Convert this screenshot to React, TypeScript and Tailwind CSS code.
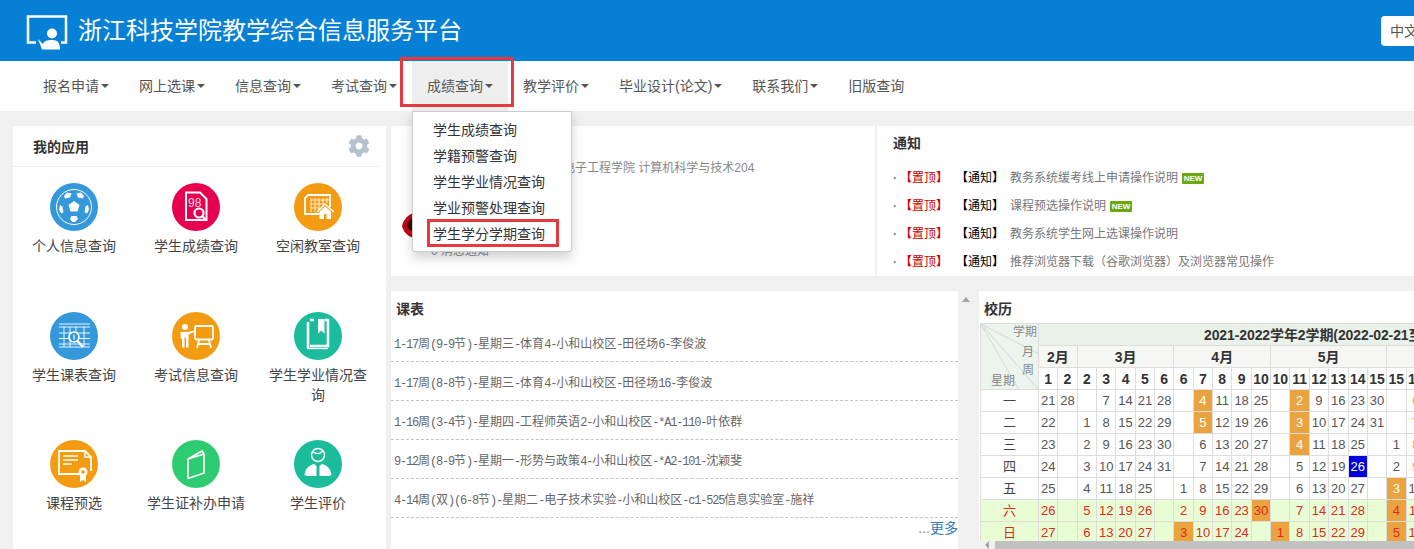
import React from "react";
import { FaCog } from "react-icons/fa";

const navItems = ["报名申请", "网上选课", "信息查询", "考试查询", "成绩查询", "教学评价", "毕业设计(论文)", "联系我们", "旧版查询"];
const menuItems = ["学生成绩查询", "学籍预警查询", "学生学业情况查询", "学业预警处理查询", "学生学分学期查询"];
const notices = [
  { text: "教务系统缓考线上申请操作说明", isNew: true },
  { text: "课程预选操作说明", isNew: true },
  { text: "教务系统学生网上选课操作说明", isNew: false },
  { text: "推荐浏览器下载（谷歌浏览器）及浏览器常见操作", isNew: false },
];
const courses = [
  "1-17周(9-9节)-星期三-体育4-小和山校区-田径场6-李俊波",
  "1-17周(8-8节)-星期三-体育4-小和山校区-田径场16-李俊波",
  "1-16周(3-4节)-星期四-工程师英语2-小和山校区-*A1-110-叶依群",
  "9-12周(8-9节)-星期一-形势与政策4-小和山校区-*A2-101-沈颖斐",
  "4-14周(双)(6-8节)-星期二-电子技术实验-小和山校区-c1-525信息实验室-施祥",
];
const weeks = [1, 2, 2, 3, 4, 5, 6, 6, 7, 8, 9, 10, 10, 11, 12, 13, 14, 15, 15, 16];
const months = [
  { label: "2月", span: 2 },
  { label: "3月", span: 5 },
  { label: "4月", span: 5 },
  { label: "5月", span: 6 },
  { label: "", span: 2 },
];
// * = 放假(橙底), ! = 当天(蓝底), ~ = 橙字
const calendar = [
  { day: "一", cells: "21,28,,7,14,21,28,,4*,11,18,25,,2*,9,16,23,30,,6~" },
  { day: "二", cells: "22,,1,8,15,22,29,,5*,12,19,26,,3*,10,17,24,31,,7~" },
  { day: "三", cells: "23,,2,9,16,23,30,,6,13,20,27,,4*,11,18,25,,1,8~" },
  { day: "四", cells: "24,,3,10,17,24,31,,7,14,21,28,,5,12,19,26!,,2,9~" },
  { day: "五", cells: "25,,4,11,18,25,,1,8,15,22,29,,6,13,20,27,,3*,10" },
  { day: "六", cells: "26,,5,12,19,26,,2,9,16,23,30*,,7,14,21,28,,4*,11", weekend: true },
  { day: "日", cells: "27,,6,13,20,27,,3*,10,17,24,,1*,8,15,22,29,,5*,12", weekend: true },
];

const Disc = ({ color, children }: { color: string; children: React.ReactNode }) => (
  <svg width="48" height="48" viewBox="0 0 48 48" fill="none">
    <circle cx="24" cy="24" r="24" fill={color} />
    {children}
  </svg>
);

const icons: Record<string, React.ReactNode> = {
  ball: (
    <Disc color="#3498db">
      <circle cx="24" cy="24" r="17.5" stroke="#fff" strokeWidth="1" />
      <path d="M24 18l5.5 4-2 6.5h-7l-2-6.5zM17 9.5l4.5 1-1.5 4-5 1-1-2.5zM31 9.5l-4.5 1 1.5 4 5 1 1-2.5zM10 22l2.5 1.5 1 6-2.5 1-2-4zM38 22l-2.500 1.500-1 6 2.500 1 2-4zM20 36l1.500-3h5l1.500 3-3 3h-3z" fill="#fff" />
    </Disc>
  ),
  score: (
    <Disc color="#e6004f">
      <path d="M14 9.500h14l6.500 6.500v21H14z" stroke="#fff" strokeWidth="2" />
      <text x="16" y="23.500" fill="#ffd5e3" fontSize="12" fontFamily="Liberation Sans">98</text>
      <circle cx="27" cy="30" r="4.500" fill="#e6004f" stroke="#fff" strokeWidth="2.200" />
      <path d="M30 33l3.500 3.500" stroke="#fff" strokeWidth="2" />
    </Disc>
  ),
  room: (
    <Disc color="#f39c12">
      <path d="M14 12h22v12M14 12l-3 3v16h15" stroke="#fff" strokeWidth="1.800" />
      <path d="M17 15v14M21 15v14M25 15v11M29 15v6M33 15v5M17 17h18M17 21h13M17 25h8" stroke="#fff" strokeWidth="0.800" />
      <path d="M23 29l8-8 9 8" stroke="#fff" strokeWidth="1.500" />
      <path d="M25.500 28.500l5.500-5 6 5V36H25.500z" fill="#fff" />
      <rect x="30" y="31" width="2.500" height="5" fill="#f39c12" />
    </Disc>
  ),
  table: (
    <Disc color="#3498db">
      <path d="M9 12h31M9 15h31M9 21h31M9 26.500h31M9 32h31M9 35h31M14 15v20M20 15v20M26 15v8M34 15v20" stroke="#fff" strokeWidth="0.900" />
      <circle cx="24" cy="25" r="5" fill="#3498db" stroke="#fff" strokeWidth="1.600" />
      <path d="M27.500 29l5.500 6" stroke="#fff" strokeWidth="2.400" />
      <path d="M24 22.500v5" stroke="#fff" strokeWidth="1.200" />
    </Disc>
  ),
  exam: (
    <Disc color="#f39c12">
      <circle cx="13" cy="15" r="3" fill="#fff" />
      <path d="M8.500 20h7l7-1.500v1.500l-6 2.500v13h-2.500v-10h-1.500v10H10V27l-1.500-1z" fill="#fff" />
      <rect x="23" y="14" width="18" height="13.500" rx="1.500" stroke="#fff" strokeWidth="1.800" />
      <path d="M27 28l-2 8M37 28l2 8M26 32h12" stroke="#fff" strokeWidth="1.800" />
    </Disc>
  ),
  book: (
    <Disc color="#1abc9c">
      <path d="M14 10v26M16 8h4M31 8h3v26H16" stroke="#fff" strokeWidth="2.600" />
      <path d="M13 36.500h21" stroke="#fff" strokeWidth="1.400" />
      <path d="M24 7h6.500v14.500l-3.200-3-3.300 3z" fill="#fff" />
    </Disc>
  ),
  cert: (
    <Disc color="#f39c12">
      <path d="M30 34H9V11h26l6 6v14" stroke="#fff" strokeWidth="1.800" />
      <path d="M35 11v6h6" stroke="#fff" strokeWidth="1.500" />
      <path d="M13 16h15M13 20h15M13 24h9" stroke="#fff" strokeWidth="1.300" />
      <circle cx="33" cy="32" r="4.500" fill="#fff" />
      <circle cx="33" cy="32" r="1.800" fill="#f39c12" />
      <path d="M30 36v6l3-2 3 2v-6z" fill="#fff" />
    </Disc>
  ),
  notebook: (
    <Disc color="#2ecc71">
      <path d="M16 19l16-5v19l-16 5.500z" stroke="#fff" strokeWidth="1.700" strokeLinejoin="round" />
      <path d="M16 19l14-8 2 3" stroke="#fff" strokeWidth="1.700" strokeLinejoin="round" />
    </Disc>
  ),
  person: (
    <Disc color="#1abc9c">
      <circle cx="24" cy="15" r="6.500" stroke="#fff" strokeWidth="1.500" />
      <path d="M19 12c3 2 7 2 10-1" stroke="#fff" strokeWidth="1.300" />
      <path d="M20 24l2.500 2V36H13c-.8-.6-1.300-.8-2.500-.8 .5-5 3-9.700 9.500-11.200zM28 24l-2.500 2V36H35c.8-.6 1.300-.8 2.500-.8-.5-5-3-9.700-9.500-11.200z" fill="#fff" />
    </Disc>
  ),
};

const apps = [
  { label: "个人信息查询", icon: "ball" },
  { label: "学生成绩查询", icon: "score" },
  { label: "空闲教室查询", icon: "room" },
  { label: "学生课表查询", icon: "table" },
  { label: "考试信息查询", icon: "exam" },
  { label: "学生学业情况查询", icon: "book" },
  { label: "课程预选", icon: "cert" },
  { label: "学生证补办申请", icon: "notebook" },
  { label: "学生评价", icon: "person" },
];

const Course = ({ text }: { text: string }) => (
  <div className="h-[39px] pl-[3px] pt-[5px] flex items-center border-b border-dashed border-[#c4c4c4] text-xs text-[#666] whitespace-nowrap">
    <span>
      {text.split(/([\x00-\x7f]+)/).map((part, i) =>
        /^[\x00-\x7f]+$/.test(part) ? (
          <span key={i} className="font-['Liberation_Mono',monospace] text-xs tracking-[-1.2px]">
            {part}
          </span>
        ) : (
          <span key={i}>{part}</span>
        )
      )}
    </span>
  </div>
);

const DayCell = ({ value, weekend }: { value: string; weekend?: boolean }) => {
  const num = value.replace(/[*!~]/, "");
  let cls = weekend ? "text-[#dd2a1c]" : "text-[#555]";
  if (value.endsWith("*")) cls = weekend ? "bg-[#eba33f] text-[#dd2a1c]" : "bg-[#eba33f] text-white";
  if (value.endsWith("!")) cls = "bg-[#0000dd] text-white";
  if (value.endsWith("~")) cls = "text-[#eba33f]";
  return <td className={`border border-[#ddd] text-center text-[13px] p-0 ${cls}`}>{num}</td>;
};

const App = () => {
  return (
    <div className="w-[1414px] h-[549px] overflow-hidden bg-[#f0f0f0] font-['Liberation_Sans','Noto_Sans_CJK_SC',sans-serif] text-[#333]">
      <header className="h-[61px] bg-[#0680d5] flex items-center pl-[25px]">
        <svg width="44" height="40" viewBox="0 0 44 40" fill="none">
          <path d="M11 31.500H3V5.500h38v26h-5" stroke="#fff" strokeWidth="2.500" />
          <circle cx="27" cy="22.500" r="5" fill="#fff" />
          <path d="M13 28l5 5c1-3 4-4 9-4 6 0 8 3 8 9.500H17z" fill="#fff" />
        </svg>
        <h1 className="ml-[9px] text-2xl font-normal text-white whitespace-nowrap">浙江科技学院教学综合信息服务平台</h1>
        <div className="ml-auto w-[33px] h-[30px] bg-white rounded-l-[4px] overflow-hidden whitespace-nowrap pl-[9px] text-sm leading-[30px] text-[#555]">
          中文
        </div>
      </header>

      <nav className="h-[50px] bg-white flex pl-[28px] text-sm text-[#555]">
        {navItems.map((item, i) => (
          <div key={item} className={`relative flex items-center px-[15px] whitespace-nowrap ${i === 4 ? "bg-[#eee]" : ""}`}>
            {item}
            {i < 8 && <span className="ml-[2px] border-t-[4px] border-x-[4px] border-x-transparent border-t-[#555]" />}
            {i === 4 && (
              <>
                <div className="absolute left-[-12px] top-[-4px] w-[114px] h-[50px] border-[3px] border-[#e8393f]" />
                <ul className="absolute z-10 left-0 top-full w-[160px] h-[141px] py-[5px] bg-white border border-[#ccc] rounded-b-[3px] shadow-[0_6px_12px_rgba(0,0,0,0.18)]">
                  {menuItems.map((m, j) => (
                    <li key={m} className="relative h-[26px] pl-[20px] leading-[26px] text-[#333]">
                      {m}
                      {j === 4 && <div className="absolute left-[14px] top-[-2px] w-[132px] h-[28px] border-[3px] border-[#e8393f]" />}
                    </li>
                  ))}
                </ul>
              </>
            )}
          </div>
        ))}
      </nav>

      <main className="flex pt-[15px] pl-[13px]">
        <aside className="w-[373px] h-[423px] bg-white shrink-0">
          <div className="h-[41px] mr-[6px] pl-[20px] pr-[10px] flex items-center justify-between border-b border-[#eee]">
            <h2 className="pt-[2px] text-sm font-bold">我的应用</h2>
            <FaCog className="text-[22px] text-[#b4c2cf]" />
          </div>
          <div className="grid grid-cols-[122px_122px_122px] auto-rows-[128.5px] pt-[16px]">
            {apps.map((app) => (
              <div key={app.label} className="flex flex-col items-center px-[6px]">
                {icons[app.icon]}
                <span className="mt-[5px] text-sm leading-[20px] text-center text-[#444]">{app.label}</span>
              </div>
            ))}
          </div>
        </aside>

        <div className="ml-[5px] flex-1 min-w-0 flex flex-col gap-[15px]">
          <section className="flex h-[150px] gap-[2px]">
            <div className="w-[484px] bg-white flex pl-[11px]">
              <svg className="self-end mb-[37px] shrink-0" width="29" height="26" viewBox="0 0 29 26">
                <path d="M0 13C1 8 5 3 9 1 14-1 24 0 29 4V24C22 27 14 26 9 24 5 22 1 18 0 13z" fill="#c6020f" />
                <circle cx="11" cy="12" r="6" fill="#33090c" />
              </svg>
              <div className="flex flex-col justify-between pt-[34px] pb-[17px] text-xs text-[#888] whitespace-nowrap">
                <p className="pl-[96px]">信息与电子工程学院 计算机科学与技术204</p>
                <p>0 消息通知</p>
              </div>
            </div>
            <div className="flex-1 bg-white pl-[16px]">
              <h2 className="h-[34px] leading-[34px] text-sm font-bold">通知</h2>
              <ul className="pt-[4px]">
                {notices.map((n) => (
                  <li key={n.text} className="h-[28px] flex items-center text-xs whitespace-nowrap">
                    <span className="w-[7px] font-bold text-[#777]">·</span>
                    <span className="w-[48px] text-[#d00000]"><b>【</b>置顶<b>】</b></span>
                    <span className="ml-[8px] w-[48px] text-black"><b>【</b>通知<b>】</b></span>
                    <span className="ml-[6px] text-[#777]">{n.text}</span>
                    {n.isNew && (
                      <span className="ml-[4px] w-[22px] h-[11px] rounded-[1px] bg-[#6aa912] text-white text-[8px] font-bold leading-[11px] text-center">
                        NEW
                      </span>
                    )}
                  </li>
                ))}
              </ul>
            </div>
          </section>

          <section className="flex h-[258px]">
            <div className="w-[567px] bg-white shrink-0">
              <h2 className="h-[32px] pl-[5px] leading-[36px] text-sm font-bold">课表</h2>
              {courses.map((c) => (
                <Course key={c} text={c} />
              ))}
              <div className="text-right text-sm leading-[20px] text-[#888]">
                ...<span className="text-[#337ab7]">更多</span>
              </div>
            </div>
            <div className="w-[16px] shrink-0 flex justify-center pt-[6px]">
              <span className="h-0 border-b-[5px] border-x-[4px] border-x-transparent border-b-[#a3a3a3]" />
            </div>
            <div className="ml-[5px] flex-1 min-w-0 bg-white flex flex-col">
              <h2 className="h-[32px] pl-[5px] leading-[36px] text-sm font-bold shrink-0">校历</h2>
              <div className="h-[218px] overflow-hidden pl-[1px] shrink-0">
                <table className="table-fixed border-collapse w-[445px]">
                  <colgroup>
                    <col className="w-[58px]" />
                    {weeks.map((_, i) => (
                      <col key={i} className="w-[19.350px]" />
                    ))}
                  </colgroup>
                  <thead>
                    <tr className="h-[22px]">
                      <th rowSpan={3} className="relative border border-[#ddd] bg-[#edf4ed] p-0 font-normal text-xs text-[#888]">
                        <svg className="absolute inset-0" width="58" height="66" viewBox="0 0 58 66" fill="none">
                          <path d="M0 0L58 66M0 0L38 66M0 0L58 30" stroke="#d4d8d4" />
                        </svg>
                        <span className="absolute right-[1px] top-0">学期</span>
                        <span className="absolute right-[4px] top-[20px]">月</span>
                        <span className="absolute right-[4px] top-[38px]">周</span>
                        <span className="absolute left-[10px] top-[49px]">星期</span>
                      </th>
                      <th colSpan={20} className="border border-[#ddd] bg-[#e9f2e9] pl-[165px] text-left text-sm font-bold tracking-[-0.1px] whitespace-nowrap">
                        2021-2022学年2学期(2022-02-21至2022-07-10)
                      </th>
                    </tr>
                    <tr className="h-[22px]">
                      {months.map((m, i) => (
                        <th key={i} colSpan={m.span} className="border border-[#ddd] bg-[#f6f7f2] p-0 text-sm font-bold">
                          {m.label}
                        </th>
                      ))}
                    </tr>
                    <tr className="h-[22px]">
                      {weeks.map((w, i) => (
                        <th key={i} className="border border-[#ddd] bg-white p-0 text-sm font-bold">
                          {w}
                        </th>
                      ))}
                    </tr>
                  </thead>
                  <tbody>
                    {calendar.map((row) => (
                      <tr key={row.day} className={`h-[22px] ${row.weekend ? "bg-[#e9fdd5]" : "bg-white"}`}>
                        <td className={`border border-[#ddd] p-0 text-center text-[13px] ${row.weekend ? "text-[#dd2a1c]" : "text-[#444]"}`}>
                          {row.day}
                        </td>
                        {row.cells.split(",").map((c, i) => (
                          <DayCell key={i} value={c} weekend={row.weekend} />
                        ))}
                      </tr>
                    ))}
                  </tbody>
                </table>
              </div>
              <div className="h-[8px] flex bg-[#f1f1f1] shrink-0">
                <div className="w-[16px] flex items-center justify-center">
                  <span className="border-r-[4px] border-y-[4px] border-y-transparent border-r-[#a3a3a3]" />
                </div>
                <div className="flex-1 bg-[#c1c1c1]" />
              </div>
            </div>
          </section>
        </div>
      </main>
    </div>
  );
};

export default App;
